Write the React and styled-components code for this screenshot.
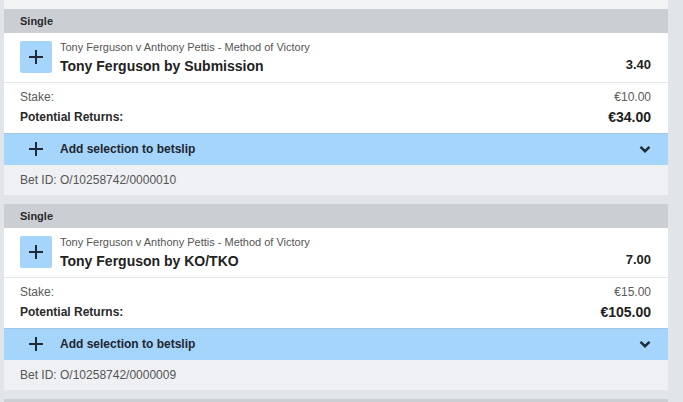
import React from 'react';
import styled, { createGlobalStyle } from 'styled-components';

const bets = [
  {
    id: 'O/10258742/0000010',
    event: 'Tony Ferguson v Anthony Pettis - Method of Victory',
    selection: 'Tony Ferguson by Submission',
    odds: '3.40',
    stake: '€10.00',
    returns: '€34.00'
  },
  {
    id: 'O/10258742/0000009',
    event: 'Tony Ferguson v Anthony Pettis - Method of Victory',
    selection: 'Tony Ferguson by KO/TKO',
    odds: '7.00',
    stake: '€15.00',
    returns: '€105.00'
  }
];

const PlusIcon = ({ size = 16 }) => (
  <svg width={size} height={size} viewBox="0 0 16 16" fill="none">
    <path d="M8 1v14M1 8h14" stroke="#1f2a36" strokeWidth="2" />
  </svg>
);

const Chevron = () => (
  <svg width="14" height="14" viewBox="0 0 14 14" fill="none">
    <path d="M2.5 4.8L7 9.2l4.5-4.4" stroke="#1f2a36" strokeWidth="2.4" />
  </svg>
);

const BetCard = ({ bet }) => (
  <Card>
    <Header>Single</Header>
    <Selection>
      <AddBox>
        <PlusIcon size={16} />
      </AddBox>
      <SelectionText>
        <EventName>{bet.event}</EventName>
        <SelectionName>{bet.selection}</SelectionName>
      </SelectionText>
      <Odds>{bet.odds}</Odds>
    </Selection>
    <Returns>
      <ReturnRow>
        <span>Stake:</span>
        <span>{bet.stake}</span>
      </ReturnRow>
      <ReturnRow strong>
        <span>Potential Returns:</span>
        <Amount>{bet.returns}</Amount>
      </ReturnRow>
    </Returns>
    <AddBar>
      <BarIcon>
        <PlusIcon size={16} />
      </BarIcon>
      <AddLabel>Add selection to betslip</AddLabel>
      <Chevron />
    </AddBar>
    <BetId>Bet ID: {bet.id}</BetId>
  </Card>
);

const App = () => (
  <>
    <GlobalStyle />
    <Page>
      <List>
        <TopEdge />
        {bets.map(bet => (
          <BetCard key={bet.id} bet={bet} />
        ))}
        <NextHeader />
      </List>
    </Page>
  </>
);

const GlobalStyle = createGlobalStyle`
  html, body {
    margin: 0;
    background: #e1e5e9;
    font-family: "Liberation Sans", Arial, sans-serif;
    overflow: hidden;
  }
`;

const Page = styled.div`
  height: 402px;
  padding: 0 15px 0 4px;
  overflow: hidden;
`;

const List = styled.div`
  display: flex;
  flex-direction: column;
  gap: 9px;
`;

const TopEdge = styled.div`
  height: 9px;
  margin-bottom: -9px;
  background: #f3f4f6;
`;

const Card = styled.div`
  display: flex;
  flex-direction: column;
`;

const Header = styled.div`
  height: 24px;
  display: flex;
  align-items: center;
  padding-left: 16px;
  background: #cbcfd3;
  color: #2a2a2a;
  font-size: 11px;
  font-weight: bold;
`;

const NextHeader = styled.div`
  height: 24px;
  flex: none;
  background: #cbcfd3;
`;

const Selection = styled.div`
  display: flex;
  align-items: flex-start;
  gap: 8px;
  height: 50px;
  padding: 8px 17px 0 16px;
  box-sizing: border-box;
  background: #fff;
  border-bottom: 1px solid #e4e6e9;
`;

const AddBox = styled.div`
  width: 32px;
  height: 32px;
  flex: none;
  display: flex;
  align-items: center;
  justify-content: center;
  border-radius: 2px;
  background: #a6d5fb;
`;

const SelectionText = styled.div`
  flex: 1;
  display: flex;
  flex-direction: column;
`;

const EventName = styled.div`
  font-size: 11px;
  line-height: 14px;
  color: #555;
  margin-top: -1px;
`;

const SelectionName = styled.div`
  font-size: 14px;
  line-height: 18px;
  font-weight: bold;
  color: #222;
  margin-top: 3px;
`;

const Odds = styled.div`
  align-self: center;
  margin-top: 6px;
  font-size: 13px;
  font-weight: bold;
  color: #222;
`;

const Returns = styled.div`
  display: flex;
  flex-direction: column;
  padding: 4px 17px 6px 16px;
  background: #fff;
`;

const ReturnRow = styled.div`
  display: flex;
  justify-content: space-between;
  align-items: center;
  height: 20px;
  font-size: 12px;
  font-weight: ${props => (props.strong ? 'bold' : 'normal')};
  color: ${props => (props.strong ? '#2a2a2a' : '#5a5a5a')};
`;

const Amount = styled.span`
  font-size: 14px;
  font-weight: bold;
  color: #1e1e1e;
`;

const AddBar = styled.div`
  display: flex;
  align-items: center;
  height: 32px;
  padding: 0 16px 0 24px;
  background: #a6d5fb;
  box-shadow: inset 0 1px 0 #9fc6e6;
`;

const BarIcon = styled.span`
  display: flex;
  width: 32px;
`;

const AddLabel = styled.span`
  flex: 1;
  font-size: 12px;
  font-weight: bold;
  color: #1e2630;
`;

const BetId = styled.div`
  height: 30px;
  display: flex;
  align-items: center;
  padding-left: 16px;
  background: #eef0f3;
  font-size: 12px;
  color: #555;
`;

export default App;
